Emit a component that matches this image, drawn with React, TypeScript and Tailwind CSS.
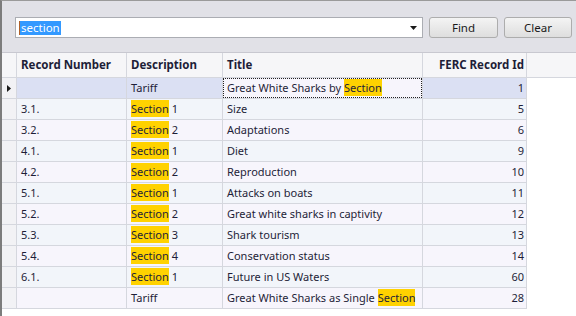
import React from 'react';

type Row = {
  num: string;
  desc: string;
  descNo?: string;
  title: string;
  titleHit?: boolean;
  id: number;
};

const rows: Row[] = [
  { num: '', desc: 'Tariff', title: 'Great White Sharks by ', titleHit: true, id: 1 },
  { num: '3.1.', desc: 'Section', descNo: '1', title: 'Size', id: 5 },
  { num: '3.2.', desc: 'Section', descNo: '2', title: 'Adaptations', id: 6 },
  { num: '4.1.', desc: 'Section', descNo: '1', title: 'Diet', id: 9 },
  { num: '4.2.', desc: 'Section', descNo: '2', title: 'Reproduction', id: 10 },
  { num: '5.1.', desc: 'Section', descNo: '1', title: 'Attacks on boats', id: 11 },
  { num: '5.2.', desc: 'Section', descNo: '2', title: 'Great white sharks in captivity', id: 12 },
  { num: '5.3.', desc: 'Section', descNo: '3', title: 'Shark tourism', id: 13 },
  { num: '5.4.', desc: 'Section', descNo: '4', title: 'Conservation status', id: 14 },
  { num: '6.1.', desc: 'Section', descNo: '1', title: 'Future in US Waters', id: 60 },
  { num: '', desc: 'Tariff', title: 'Great White Sharks as Single ', titleHit: true, id: 28 },
];

const Hit = ({ children }: { children: React.ReactNode }) => (
  <span className="bg-[#ffd200] py-px">{children}</span>
);

export default function App() {
  return (
    <div
      className="w-[576px] h-[316px] overflow-hidden bg-white border-l-2 border-t border-l-[#7c7c7c] border-t-[#9a9a9a] text-[11px] text-[#1e1e38] flex flex-col"
      style={{ fontFamily: '"Noto Sans", "Open Sans", sans-serif' }}
    >
      {/* Search bar */}
      <div className="h-[52px] shrink-0 bg-[#e1e1e7] flex items-start pt-[16px] pl-[13px] border-b border-[#c8c8d0] text-[11.5px]">
        <div className="w-[408px] h-[21px] bg-white border border-[#abadb3] flex items-center pl-[3px] pr-[5px]">
          <div className="w-px h-[14px] bg-[#b0602a]" />
          <span className="bg-[#3399ff] text-white leading-[14px] h-[14px] px-px">section</span>
          <div className="flex-1" />
          <svg width="7" height="4" viewBox="0 0 7 4" className="mt-px">
            <path d="M0 0h7L3.5 4z" fill="#1a1a1a" />
          </svg>
        </div>
        <button className="ml-[6px] w-[69px] h-[21px] rounded-[3px] border border-[#adadad] bg-gradient-to-b from-[#f4f4f4] to-[#dedede] text-[#1a1a1a] leading-none">
          Find
        </button>
        <button className="ml-[6px] w-[68px] h-[21px] rounded-[3px] border border-[#adadad] bg-gradient-to-b from-[#f4f4f4] to-[#dedede] text-[#1a1a1a] leading-none">
          Clear
        </button>
      </div>

      {/* Grid */}
      <div className="flex flex-col">
        <div className="flex h-[25px] bg-[#f6f6f8] border-b border-[#d5d7de] font-bold text-[11.5px]">
          <div className="w-[15px] border-r border-[#d5d7de]" />
          <div className="w-[110px] border-r border-[#d5d7de] pl-[4px] flex items-center">Record Number</div>
          <div className="w-[96px] border-r border-[#d5d7de] pl-[4px] flex items-center">Description</div>
          <div className="w-[200px] border-r border-[#d5d7de] pl-[4px] flex items-center">Title</div>
          <div className="w-[104px] border-r border-[#d5d7de] pr-[2px] flex items-center justify-end">FERC Record Id</div>
          <div className="flex-1" />
        </div>
        {rows.map((r, i) => {
          const current = i === 0;
          const base = i % 2 === 1 ? 'bg-[#f2f5fa]' : 'bg-[#f7f5fc]';
          const cell = current ? 'bg-[#dbe0f3]' : base;
          return (
            <div key={i} className="flex h-[21px]">
              <div className="w-[15px] bg-[#f2f2f5] border-r border-b border-[#d5d7de] flex items-center justify-center">
                {current && (
                  <svg width="4" height="7" viewBox="0 0 4 7">
                    <path d="M0 0v7l4-3.5z" fill="#1a1a1a" />
                  </svg>
                )}
              </div>
              <div className={`w-[110px] ${cell} border-r border-b border-[#d5d7de] pl-[4px] flex items-center`}>
                {r.num}
              </div>
              <div className={`w-[96px] ${cell} border-r border-b border-[#d5d7de] pl-[4px] flex items-center`}>
                {r.descNo ? (
                  <span className="whitespace-pre">
                    <Hit>{r.desc}</Hit>
                    {' ' + r.descNo}
                  </span>
                ) : (
                  <span>{r.desc}</span>
                )}
              </div>
              <div className={`w-[200px] ${base} border-r border-b border-[#d5d7de] flex items-center relative`}>
                {current && (
                  <div className="absolute inset-0 border border-dotted border-[#222]" />
                )}
                <span className="pl-[4px] whitespace-pre">
                  {r.title}
                  {r.titleHit && <Hit>Section</Hit>}
                </span>
              </div>
              <div className={`w-[104px] ${cell} border-r border-b border-[#d5d7de] pr-[2px] flex items-center justify-end`}>
                {r.id}
              </div>
              <div className="flex-1" />
            </div>
          );
        })}
      </div>
    </div>
  );
}
